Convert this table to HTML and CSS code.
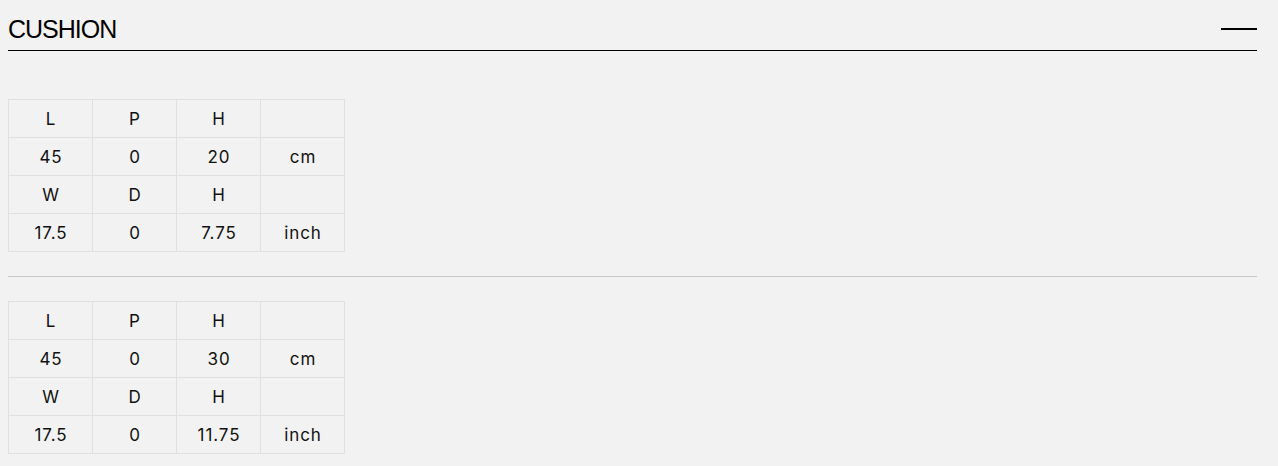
FILE: index.html
```html
<!DOCTYPE html>
<html>
<head>
<meta charset="utf-8">
<link rel="stylesheet" href="styles.css">
</head>
<body>
<div class="section">
  <div class="section-head">
    <h2 class="section-title">CUSHION</h2>
    <span class="toggle" aria-label="collapse"></span>
  </div>
  <div class="variant">
    <table class="dims">
      <tr><td>L</td><td>P</td><td>H</td><td></td></tr>
      <tr><td>45</td><td>0</td><td>20</td><td>cm</td></tr>
      <tr><td>W</td><td>D</td><td>H</td><td></td></tr>
      <tr><td>17.5</td><td>0</td><td>7.75</td><td>inch</td></tr>
    </table>
  </div>
  <div class="variant divided">
    <table class="dims">
      <tr><td>L</td><td>P</td><td>H</td><td></td></tr>
      <tr><td>45</td><td>0</td><td>30</td><td>cm</td></tr>
      <tr><td>W</td><td>D</td><td>H</td><td></td></tr>
      <tr><td>17.5</td><td>0</td><td>11.75</td><td>inch</td></tr>
    </table>
  </div>
</div>
</body>
</html>
```
FILE: styles.css
```css
html, body {
  margin: 0;
  background: #f2f2f2;
}
body {
  font-family: "Inter", "Liberation Sans", sans-serif;
  color: #111;
}
.section {
  padding: 0 21px 0 8px;
}
.section-head {
  display: flex;
  align-items: center;
  justify-content: space-between;
  height: 50px;
  border-bottom: 1px solid #000;
}
.section-title {
  margin: 0;
  font-family: "Liberation Sans", sans-serif;
  font-weight: 400;
  font-size: 25px;
  letter-spacing: -1px;
  padding-top: 8px;
  color: #000;
}
.toggle {
  width: 36px;
  height: 2px;
  background: #000;
  margin-top: 7px;
}
.variant {
  padding: 48px 0 24px;
}
.variant.divided {
  border-top: 1px solid #c8c8c8;
  padding-top: 24px;
}
.dims {
  border-collapse: collapse;
  table-layout: fixed;
}
.dims td {
  border: 1px solid #e0e0e0;
  width: 82px;
  height: 37px;
  padding: 0 0 0 1px;
  text-align: center;
  font-size: 17px;
  letter-spacing: 0.9px;
}
```
